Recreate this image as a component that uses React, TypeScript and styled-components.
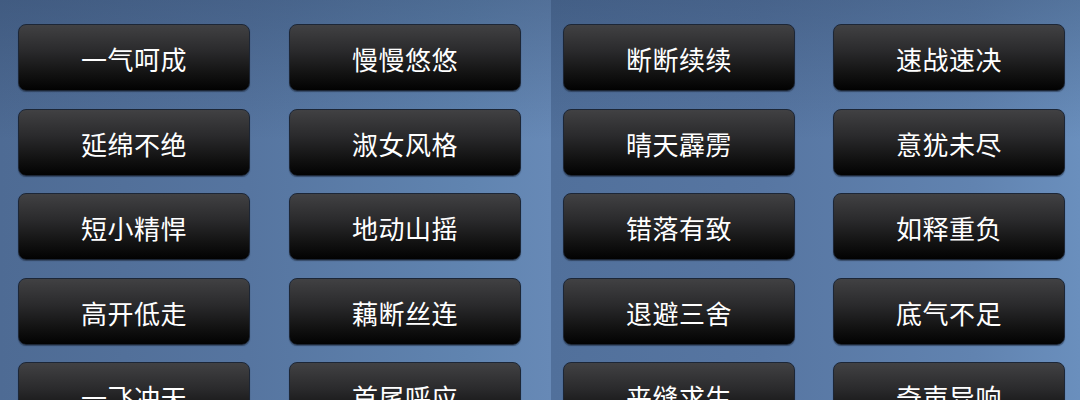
import styled, { createGlobalStyle } from "styled-components";

const GlobalStyle = createGlobalStyle`
    html, body {
        margin: 0;
        padding: 0;
        height: 400px;
        overflow: hidden;
        background: #52719c;
    }
    * {
        box-sizing: border-box;
    }
`;

const leftPage = [
    ["一气呵成", "慢慢悠悠"],
    ["延绵不绝", "淑女风格"],
    ["短小精悍", "地动山摇"],
    ["高开低走", "藕断丝连"],
    ["一飞冲天", "首尾呼应"],
];

const rightPage = [
    ["断断续续", "速战速决"],
    ["晴天霹雳", "意犹未尽"],
    ["错落有致", "如释重负"],
    ["退避三舍", "底气不足"],
    ["来缝求生", "奇声异响"],
];

const Style = {
    Screen: styled.div`
        display: flex;
        width: 1080px;
        height: 400px;
        overflow: hidden;
        font-family: "Noto Sans CJK SC", "Noto Sans", sans-serif;
    `,
    Page: styled.div<{ $side: "left" | "right" }>`
        display: grid;
        grid-template-columns: 232px 232px;
        grid-auto-rows: 67px;
        column-gap: ${({ $side }) => ($side === "left" ? "39px" : "38px")};
        row-gap: 17.5px;
        align-content: start;
        height: 400px;
        width: ${({ $side }) => ($side === "left" ? "551px" : "529px")};
        padding: ${({ $side }) => ($side === "left" ? "24px 30px 0 18px" : "24px 15px 0 12px")};
        background:
            linear-gradient(to bottom, rgba(35, 55, 85, 0.3) 0%, rgba(35, 55, 85, 0) 35%),
            ${({ $side }) =>
                $side === "left"
                    ? "linear-gradient(to right, #4e6b94 0%, #5675a0 45%, #6084b0 85%, #6789b6 100%)"
                    : "linear-gradient(to right, #51709b 0%, #5776a2 40%, #6183b0 80%, #6a8fbd 100%)"};
    `,
    Button: styled.button`
        display: flex;
        justify-content: center;
        align-items: center;
        padding: 2px 0 0;
        border: 1px solid #1c2636;
        border-radius: 8px;
        background: linear-gradient(to bottom, #414143 0%, #2a2a2c 40%, #121212 75%, #020202 100%);
        box-shadow: 0 1px 1px rgba(20, 30, 45, 0.5);
        color: #ffffff;
        font-family: "Noto Sans CJK SC", "Noto Sans", sans-serif;
        font-size: 26px;
        font-weight: 400;
        letter-spacing: 0.5px;
        cursor: pointer;
    `,
};

function Page({ side, rows }: { side: "left" | "right"; rows: string[][] }) {
    return (
        <Style.Page $side={side}>
            {rows.flat().map((label) => (
                <Style.Button key={label}>{label}</Style.Button>
            ))}
        </Style.Page>
    );
}

export default function App() {
    return (
        <>
            <GlobalStyle />
            <Style.Screen>
                <Page side="left" rows={leftPage} />
                <Page side="right" rows={rightPage} />
            </Style.Screen>
        </>
    );
}
